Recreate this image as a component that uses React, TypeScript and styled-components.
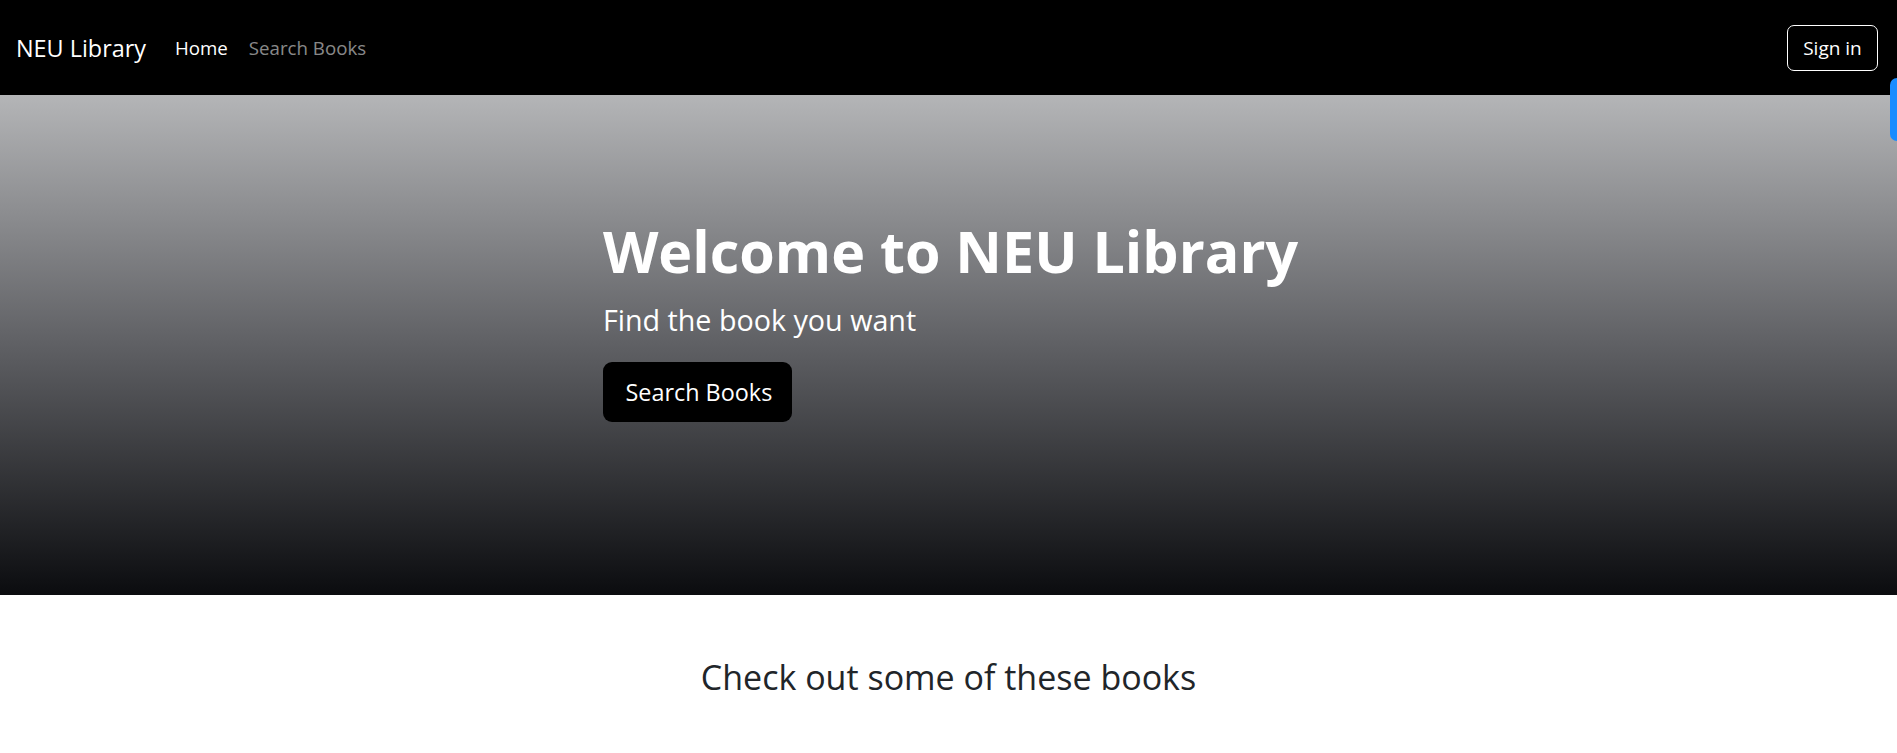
import React from "react";
import styled, { createGlobalStyle } from "styled-components";

const Global = createGlobalStyle`
  html, body { margin: 0; padding: 0; background: #fff; }
  body { font-family: "Open Sans", "Noto Sans", sans-serif; color: #212529; }
  * { box-sizing: border-box; }
`;

const Navbar = styled.nav`
  height: 95px;
  background: #000;
  display: flex;
  align-items: center;
  padding: 0 19px 0 16px;
`;

const Brand = styled.a`
  color: #fff;
  font-size: 23.4px;
  line-height: 1;
  text-decoration: none;
  margin-right: 29px;
  white-space: nowrap;
  padding-top: 3px;
`;

const NavList = styled.div`
  display: flex;
  align-items: center;
  gap: 21px;
  flex: 1;
`;

const NavLink = styled.a<{ $active?: boolean }>`
  color: ${(p) => (p.$active ? "#fff" : "rgba(255,255,255,0.55)")};
  font-size: 18.7px;
  text-decoration: none;
  white-space: nowrap;
`;

const OutlineButton = styled.button`
  width: 91px;
  height: 46px;
  background: transparent;
  border: 1px solid #fff;
  border-radius: 7px;
  color: #fff;
  font-family: inherit;
  font-size: 19px;
  padding: 0;
  cursor: pointer;
`;

const Hero = styled.header`
  height: 500px;
  background: linear-gradient(to bottom, #b4b5b7 0%, #5f6064 50%, #0b0c0f 100%);
  display: flex;
  justify-content: center;
  padding-top: 122px;
`;

const HeroInner = styled.div`
  display: flex;
  flex-direction: column;
  align-items: flex-start;
  margin-left: 4px;
`;

const HeroTitle = styled.h1`
  margin: 0;
  color: #fff;
  font-size: 57.4px;
  font-weight: 700;
  line-height: 1.2;
`;

const HeroLead = styled.p`
  margin: 14px 0 22px;
  color: #fff;
  font-size: 28.7px;
  font-weight: 400;
  line-height: 1.4;
`;

const DarkButton = styled.button`
  width: 189px;
  height: 60px;
  background: #000;
  border: none;
  border-radius: 9px;
  color: #fff;
  font-family: inherit;
  font-size: 23.4px;
  padding: 0 0 0 3px;
  cursor: pointer;
`;

const Section = styled.section`
  padding-top: 62px;
  text-align: center;
`;

const SectionTitle = styled.h2`
  margin: 0;
  font-size: 34px;
  font-weight: 500;
  line-height: 1.2;
  color: #212529;
`;

const SideTab = styled.div`
  position: fixed;
  right: 0;
  top: 78px;
  width: 7px;
  height: 63px;
  background: #1a8cff;
  border-radius: 8px 0 0 8px;
`;

export default function App() {
  return (
    <>
      <Global />
      <Navbar>
        <Brand href="#">NEU Library</Brand>
        <NavList>
          <NavLink href="#" $active>
            Home
          </NavLink>
          <NavLink href="#">Search Books</NavLink>
        </NavList>
        <OutlineButton>Sign in</OutlineButton>
      </Navbar>
      <Hero>
        <HeroInner>
          <HeroTitle>Welcome to NEU Library</HeroTitle>
          <HeroLead>Find the book you want</HeroLead>
          <DarkButton>Search Books</DarkButton>
        </HeroInner>
      </Hero>
      <Section>
        <SectionTitle>Check out some of these books</SectionTitle>
      </Section>
      <SideTab />
    </>
  );
}
